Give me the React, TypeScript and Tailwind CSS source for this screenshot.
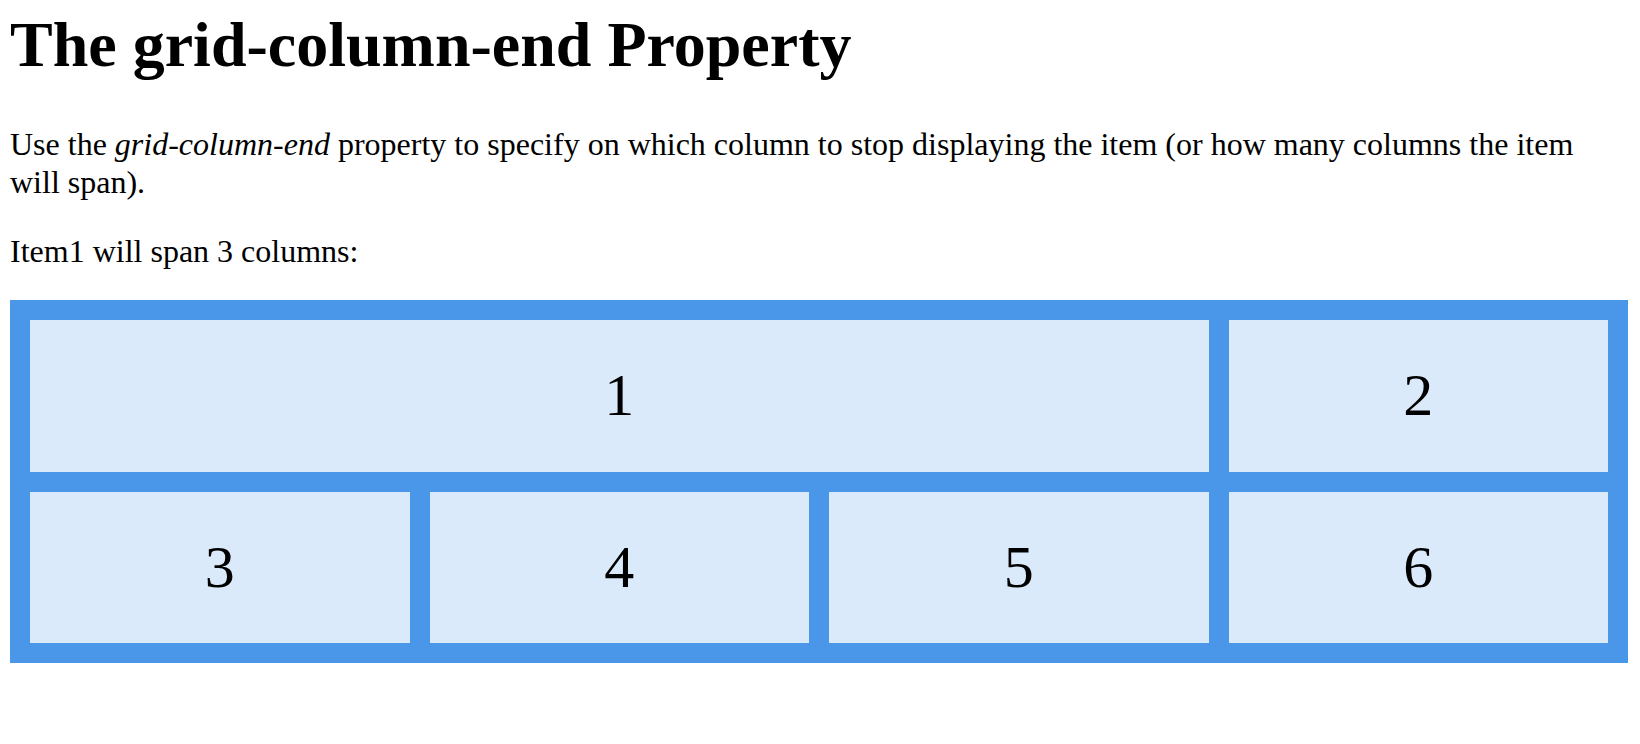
export default function App() {
  const serif = { fontFamily: '"Liberation Serif", "Times New Roman", serif' };
  return (
    <div className="bg-white text-black pl-[10px] pr-[12px] pt-[7px] pb-[20px]" style={serif}>
      <h1 className="m-0 mb-[42px] text-[64px] leading-[76px] font-bold">The grid-column-end Property</h1>
      <p className="m-0 mb-[31px] text-[32px] leading-[38px]">
        Use the <em>grid-column-end</em> property to specify on which column to stop displaying the item (or how many columns the item will span).
      </p>
      <p className="m-0 mb-[30px] text-[32px] leading-[38px]">Item1 will span 3 columns:</p>
      <div className="grid grid-cols-4 gap-[20px] p-[20px] bg-[#4A97E9]">
        <div className="col-span-3 bg-[#DBEAFA] text-center py-[40px] text-[60px] leading-[71.7px]">1</div>
        <div className="bg-[#DBEAFA] text-center py-[40px] text-[60px] leading-[71.7px]">2</div>
        <div className="bg-[#DBEAFA] text-center py-[40px] text-[60px] leading-[71.7px]">3</div>
        <div className="bg-[#DBEAFA] text-center py-[40px] text-[60px] leading-[71.7px]">4</div>
        <div className="bg-[#DBEAFA] text-center py-[40px] text-[60px] leading-[71.7px]">5</div>
        <div className="bg-[#DBEAFA] text-center py-[40px] text-[60px] leading-[71.7px]">6</div>
      </div>
    </div>
  );
}
